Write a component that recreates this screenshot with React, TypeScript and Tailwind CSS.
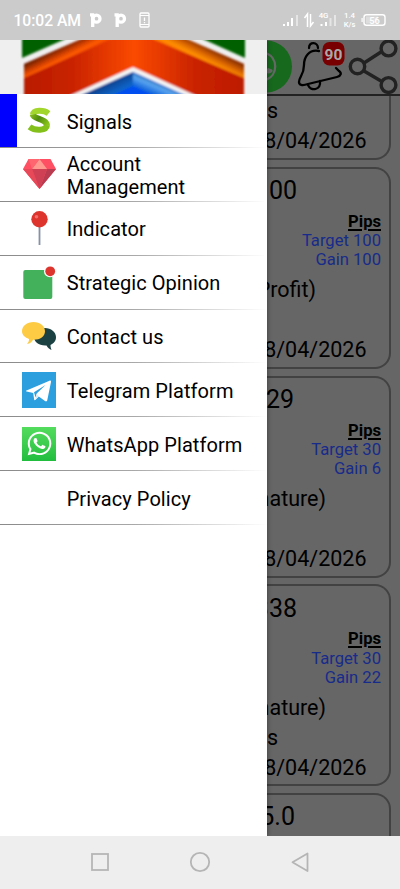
import React from "react";
import { FaWhatsapp } from "react-icons/fa";

const Logo = () => (
  <svg className="h-[54px] w-[267px] shrink-0" viewBox="0 40 267 54" preserveAspectRatio="none">
    <defs>
      <linearGradient id="body" x1="24" x2="244" y1="0" y2="0" gradientUnits="userSpaceOnUse">
        <stop offset="0" stopColor="#b91b00" />
        <stop offset="0.22" stopColor="#c92300" />
        <stop offset="0.5" stopColor="#fb4a00" />
        <stop offset="0.78" stopColor="#c92300" />
        <stop offset="1" stopColor="#bd1a00" />
      </linearGradient>
      <linearGradient id="stripL" x1="60" y1="47" x2="67" y2="61" gradientUnits="userSpaceOnUse">
        <stop offset="0" stopColor="#6e1d00" />
        <stop offset="0.5" stopColor="#d94300" />
        <stop offset="0.75" stopColor="#ff5c00" />
        <stop offset="1" stopColor="#f04800" />
      </linearGradient>
      <linearGradient id="stripR" x1="207" y1="47" x2="200" y2="61" gradientUnits="userSpaceOnUse">
        <stop offset="0" stopColor="#8a3000" />
        <stop offset="0.45" stopColor="#d96500" />
        <stop offset="0.8" stopColor="#ff9000" />
        <stop offset="1" stopColor="#ff7a00" />
      </linearGradient>
      <linearGradient id="blueR" x1="160" y1="80" x2="154" y2="94" gradientUnits="userSpaceOnUse">
        <stop offset="0" stopColor="#0d4a9c" />
        <stop offset="0.5" stopColor="#5aa5ee" />
        <stop offset="1" stopColor="#1567dd" />
      </linearGradient>
      <linearGradient id="blueL" x1="106" y1="82" x2="112" y2="94" gradientUnits="userSpaceOnUse">
        <stop offset="0" stopColor="#063c82" />
        <stop offset="1" stopColor="#0d64c8" />
      </linearGradient>
      <filter id="soft" x="-5%" y="-5%" width="110%" height="110%">
        <feGaussianBlur stdDeviation="0.8" />
      </filter>
    </defs>
    <rect y="40" width="267" height="54" fill="#efefef" />
    <g filter="url(#soft)">
      <path d="M22 36H71L63 40L22 58Z" fill="#006000" />
      <path d="M197 36H245V58L205 40Z" fill="#006000" />
      <path d="M24 64L79 40L88 36H180L189 40L244 64V98H24Z" fill="url(#body)" />
      <path d="M24 64L79 40L88 36H118L109 40L24 78Z" fill="url(#stripL)" />
      <path d="M244 64L189 40L180 36H146L155 40L244 78Z" fill="url(#stripR)" />
      <path d="M65 98L133 67L201 98Z" fill="#f4f4f4" />
      <path d="M75 98L133 72L191 98Z" fill="#004df0" />
      <path d="M75 98L133 72V86L106 98Z" fill="url(#blueL)" />
      <path d="M191 98L133 72V86L160 98Z" fill="url(#blueR)" />
    </g>
  </svg>
);

const SignalsIcon = () => (
  <svg className="h-[26px] w-6" viewBox="0 0 24 26" fill="none">
    <defs>
      <linearGradient id="sMid" x1="3" y1="7" x2="21" y2="19" gradientUnits="userSpaceOnUse">
        <stop offset="0" stopColor="#8cc21c" />
        <stop offset="0.45" stopColor="#4f8a10" />
        <stop offset="1" stopColor="#8fca1c" />
      </linearGradient>
    </defs>
    <path d="M21.500 6.500C17 3 6.500 2.500 6 7.800" stroke="#a3d62c" strokeWidth="6" />
    <path d="M20 18C19.500 24 8 24 2.500 19.800" stroke="#84c01c" strokeWidth="6" />
    <path d="M5.800 7.500C6.500 12.500 19.500 11.500 20 18.500" stroke="url(#sMid)" strokeWidth="6" />
  </svg>
);
const GemIcon = () => (
  <svg className="h-[30px] w-[33px]" viewBox="0 0 33 30">
    <path d="M5.500 0H27.500L33 10L16.500 30L0 10Z" fill="#ff4f62" />
    <path d="M0 10H9L16.500 30Z" fill="#e84958" />
    <path d="M33 10H24L16.500 30Z" fill="#b93b50" />
    <path d="M9 10H24L16.500 30Z" fill="#cf4055" />
    <path d="M16.500 0L24 10H9Z" fill="#ff9a91" />
    <path d="M5.500 0H16.500L9 10Z" fill="#ff6670" />
  </svg>
);
const PinIcon = () => (
  <svg className="h-[34px] w-[17px]" viewBox="0 0 17 34">
    <path d="M8.500 14V34" stroke="#8492a6" strokeWidth="1.800" />
    <circle cx="8.500" cy="8.200" r="8.200" fill="#dd352e" />
    <circle cx="5.500" cy="5.800" r="1.800" fill="#f2706b" />
  </svg>
);
const OpinionIcon = () => (
  <svg className="h-[33px] w-[33px]" viewBox="0 0 33 33">
    <rect x="0.300" y="4" width="29" height="29" rx="2" fill="#43b05c" />
    <circle cx="27" cy="5.300" r="6" fill="#fff" />
    <circle cx="27.200" cy="5.300" r="4.900" fill="#dd352e" />
  </svg>
);
const ChatIcon = () => (
  <svg className="h-[29px] w-[34px]" viewBox="0 0 34 29">
    <path d="M23 6C29 6 34 10 34 15c0 4-2 6-5.500 8 0 2 .5 3.500 1 5-2-1-4-2.500-5-4.500C17 24 12 20 12 15S17 6 23 6Z" fill="#1c4143" />
    <path d="M11.500 0C18 0 23 4 23 9.300S18 18 11 17.800C10 20 8 21.500 5 22c1.500-1.500 2-3 2-5C3 15.500 0 13 0 9.300 0 4 5 0 11.500 0Z" fill="#fecb44" />
  </svg>
);
const TelegramIcon = () => (
  <svg className="h-9 w-[34px]" viewBox="0 0 34 36">
    <rect width="34" height="36" fill="#2c9fdf" />
    <path d="M4.500 18.500L27.500 8.700c1-.4 1.700.2 1.500 1.400L25.300 28c-.3 1.500-1.200 1.800-2.300 1.100l-6.200-4.700-3.200 3.400c-.8.700-1.400.4-1.500-.6l-.9-6.300-6.500-1.300c-1-.3-1.100-.8-.2-1.100Z" fill="#fff" />
    <path d="M12 20.300L23.500 13L14.700 21.500l-1.200 4Z" fill="#2c9fdf" />
    <path d="M14.500 22l2.300 2.300-3.300 3.300Z" fill="#d3e9f8" />
  </svg>
);
const WhatsIcon = () => (
  <div className="flex h-[34px] w-[34px] items-center justify-center bg-gradient-to-b from-[#53dc5e] to-[#1fbd3e]">
    <FaWhatsapp className="h-[27px] w-[27px] text-white" />
  </div>
);

type Item = { label: string; icon?: React.ReactNode; active?: boolean };
const items: Item[] = [
  { label: "Signals", icon: <SignalsIcon />, active: true },
  { label: "Account Management", icon: <GemIcon /> },
  { label: "Indicator", icon: <PinIcon /> },
  { label: "Strategic Opinion", icon: <OpinionIcon /> },
  { label: "Contact us", icon: <ChatIcon /> },
  { label: "Telegram Platform", icon: <TelegramIcon /> },
  { label: "WhatsApp Platform", icon: <WhatsIcon /> },
  { label: "Privacy Policy" },
];

const MenuRow = ({ label, icon, active }: Item) => (
  <div className="flex h-[53.900px] flex-col">
    <div className="flex min-h-0 flex-1 items-center">
      <div className={active ? "h-full w-[17px] bg-[#0000ff]" : "h-full w-[17px]"} />
      <div className="flex w-11 shrink-0 items-center justify-center">{icon}</div>
      <div className="ml-[5.700px] w-[150px] grow pt-[3.300px] text-[20px] leading-[23px] tracking-[0.070px] text-black">
        {label === "Account Management" ? (
          <>
            Account
            <br />
            Management
          </>
        ) : (
          label
        )}
      </div>
    </div>
    <div className="h-px bg-gradient-to-r from-[#8a8a8a] via-[#a8a8a8] to-white" />
  </div>
);

type Signal = { price: string; target: string; gain: string; note: string; notePad: string; pricePad: string; status: string };
const signals: Signal[] = [
  { price: "4100", target: "Target 100", gain: "Gain 100", note: "(Profit)", notePad: "pr-[73px]", pricePad: "pr-[92px]", status: "" },
  { price: "29", target: "Target 30", gain: "Gain 6", note: "(Premature)", notePad: "pr-[63px]", pricePad: "pr-[95px]", status: "" },
  { price: "338", target: "Target 30", gain: "Gain 22", note: "(Premature)", notePad: "pr-[63px]", pricePad: "pr-[92px]", status: "Pips" },
  { price: "4715.0", target: "", gain: "", note: "", notePad: "", pricePad: "pr-[94px]", status: "" },
];

const DateRow = () => (
  <div className="flex h-[31px] items-center justify-end pr-[22.500px] text-[21.500px]">08/04/2026</div>
);

const Card = ({ s }: { s: Signal }) => (
  <div className="mb-[6.800px] flex h-[202px] w-[124px] shrink-0 flex-col overflow-hidden whitespace-nowrap rounded-r-[16px] border-y-2 border-r-2 border-[#424242] text-black">
    <div className={`flex h-[43px] items-center justify-end pt-px text-[25px] ${s.pricePad}`}>{s.price}</div>
    {s.target && (
      <>
        <div className="pr-[8px] text-right text-[16.600px] leading-[19.300px]">
          <div className="font-bold underline decoration-[1.500px] underline-offset-2">Pips</div>
          <div className="text-[#172b8a]">{s.target}</div>
          <div className="text-[#172b8a]">{s.gain}</div>
        </div>
        <div className={`mt-[5px] flex h-[31px] items-center justify-end text-[21.500px] ${s.notePad}`}>{s.note}</div>
        <div className="flex h-[29px] items-center justify-end pr-[111px] text-[21.500px]">{s.status}</div>
        <DateRow />
      </>
    )}
  </div>
);

const Header = () => (
  <svg className="h-[54px] w-[133px] shrink-0" viewBox="267 40 133 54">
    <circle cx="266" cy="66.500" r="26" fill="#17691e" />
    <path d="M266 53A14.500 14.500 0 0 1 266 80" fill="none" stroke="#656965" strokeWidth="2.300" />
    <path d="M266 70l2-2 4 1.500c2 2-1 4-3.500 4L266 73Z" fill="#656965" />
    <g fill="none" stroke="#000" strokeWidth="2.300" strokeLinecap="round">
      <path d="M319 51C309 49 304 57 304 65C304 75 299 77 299 82C299 85 302 86 308 84L337 77C341 76 342 73 339 71L336 68" />
      <path d="M309 48C309 41 318 42 318 48" />
      <path d="M308 85C311 92 321 90 320 81" />
    </g>
    <rect x="322.500" y="42" width="22" height="23.500" rx="7" fill="#780000" />
    <text x="333.500" y="60" textAnchor="middle" fill="#aaa" fontFamily="Roboto, sans-serif" fontWeight="700" fontSize="15.500">90</text>
    <g fill="none" stroke="#222" strokeWidth="3.400">
      <path d="M364 63L381 52M364 71L381 81" />
      <circle cx="357.500" cy="66.500" r="7.200" />
      <circle cx="388.500" cy="48.500" r="7.400" />
      <circle cx="388.500" cy="85" r="7.400" />
    </g>
  </svg>
);

const StatusBar = () => (
  <div className="flex h-10 shrink-0 items-center bg-[#cbcbcb] pl-[13.500px] text-white">
    <span className="w-[67.500px] shrink-0 whitespace-nowrap pt-[2px] text-[15.700px] font-medium tracking-[-0.050px]">10:02 AM</span>
    <svg className="h-10 w-[319px]" viewBox="81 0 319 40" fill="#fff">
      <g fill="none" stroke="#fff" strokeWidth="3.300">
        <path d="M92.700 27V16M90 14.800h4.300" />
        <circle cx="96.500" cy="18.700" r="3.500" />
        <path d="M117.200 27V16M114.500 14.800h4.300" />
        <circle cx="121" cy="18.700" r="3.500" />
      </g>
      <rect x="140" y="13" width="9" height="14" rx="1" fill="none" stroke="#fff" strokeWidth="1.300" />
      <path d="M140 15.500h9M140 24.500h9" stroke="#fff" strokeWidth="1" />
      <path d="M144.500 17.500v3.500M144.500 22v1.300" stroke="#fff" strokeWidth="1.300" />
      <path d="M283 24h2v2h-2zM287 22h2v4h-2zM291 18h2v8h-2zM320.500 24h2v2h-2zM325 22h2v4h-2z" />
      <path d="M296 15h2v11h-2zM329.500 18h2v8h-2zM334 15h2v11h-2z" opacity=".5" />
      <path d="M304.500 18l3-4v13M310.500 14v12l3-4" fill="none" stroke="#fff" strokeWidth="1.500" />
      <g fontFamily="Roboto, sans-serif" textAnchor="middle">
        <text x="323.500" y="17.500" fontSize="7.800" fontWeight="500">4G</text>
        <text x="349.500" y="18" fontSize="7.800" fontWeight="500">1.4</text>
        <text x="349.500" y="27" fontSize="7.600" fontWeight="500">K/s</text>
      </g>
      <rect x="364" y="14.800" width="21" height="10.500" rx="2.500" fill="none" stroke="#fff" strokeWidth="1.400" />
      <rect x="366" y="16.500" width="12" height="7" opacity=".35" />
      <path d="M361.500 18h1.200v4h-1.200z" />
      <text x="374.500" y="23.500" fontSize="9.300" fontWeight="500" fontFamily="Roboto, sans-serif" textAnchor="middle">56</text>
    </svg>
  </div>
);

export default function App() {
  return (
    <div className="flex h-[889px] w-[400px] flex-col overflow-hidden bg-white font-['Roboto',sans-serif]">
      <StatusBar />
      <div className="flex h-[795.500px] shrink-0 overflow-hidden">
        <aside className="relative z-10 flex w-[267px] shrink-0 flex-col bg-white shadow-[1px_0_4px_rgba(0,0,0,0.3)]">
          <Logo />
          {items.map((i) => (
            <MenuRow key={i.label} {...i} />
          ))}
        </aside>
        <main className="flex w-[133px] shrink-0 flex-col overflow-hidden bg-[#666]">
          <Header />
          <div className="h-[1.500px] shrink-0 bg-[#222]" />
          <div className="mb-[6.800px] flex h-[64.500px] w-[124px] shrink-0 flex-col justify-end overflow-hidden rounded-br-[16px] border-b-2 border-r-2 border-[#424242] pb-[1.500px]">
            <div className="flex h-[29px] items-center justify-end pr-[111px] text-[21.500px]">Pips</div>
            <DateRow />
          </div>
          {signals.map((s, i) => (
            <Card key={i} s={s} />
          ))}
        </main>
      </div>
      <nav className="flex flex-1 items-start justify-center bg-[#eee]">
        <svg className="h-[53px] w-[400px]" viewBox="0 836 400 53" fill="none" stroke="#b5b5b5" strokeWidth="1.800">
          <rect x="92" y="854" width="16" height="16" />
          <circle cx="200" cy="862" r="9.200" />
          <path d="M307.500 853.500V871L292.500 862.300Z" strokeLinejoin="round" />
        </svg>
      </nav>
    </div>
  );
}
